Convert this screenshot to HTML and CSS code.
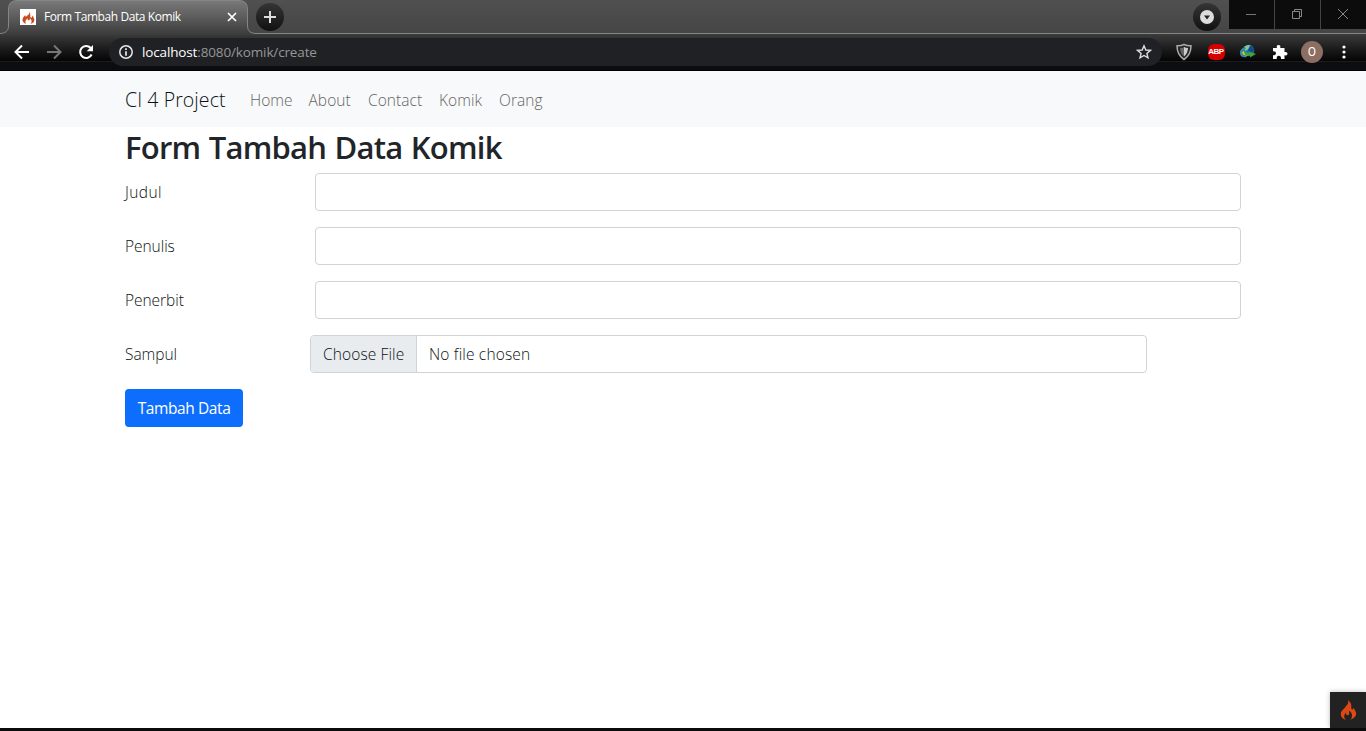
FILE: index.html
```html
<!DOCTYPE html>
<html lang="id">
<head>
<meta charset="utf-8">
<title>Form Tambah Data Komik</title>
<link rel="stylesheet" href="styles.css">
</head>
<body>
<header class="browser">
  <div class="tabstrip">
    <svg class="tab-shape" width="1366" height="35" viewBox="0 0 1366 35">
      <defs><linearGradient id="tabfill" x1="0" y1="0" x2="0" y2="1"><stop offset="0" stop-color="#797979"/><stop offset=".5" stop-color="#5b5b5b"/><stop offset="1" stop-color="#3b3b3b"/></linearGradient></defs>
      <path d="M0 33.5C5 33.5 8.500 31 8.500 26V9Q8.500.5 17 .5H239Q247.500.5 247.500 9V26Q247.500 33.500 256 33.500V35H0Z" fill="url(#tabfill)"/>
      <path d="M0 33.500C5 33.500 8.500 31 8.500 26V9Q8.500.5 17 .5H239Q247.500.5 247.500 9V26Q247.500 33.500 256 33.500H1366" fill="none" stroke="#858585"/>
    </svg>
    <div class="tab">
      <span class="favicon"><svg width="13" height="13" viewBox="0 0 20 20"><path class="flame" d="M10 0C14 4 9 6 6 9C5 8 5 7 5 6C2 9 0 12 1 15C2 18 4 19 6 20C4 16 6 13 9 11C8 13 9 15 11 14C13 13 12 12 12 11C15 13 16 17 13 20C17 19 19 17 19 14C19 11 17 10 17 7C15 8 16 11 14 10C11 9 15 4 10 0Z"/></svg></span>
      <span class="tab-title">Form Tambah Data Komik</span>
      <svg class="tab-close" width="10" height="10" viewBox="0 0 10 10"><path d="M1 1L9 9M9 1L1 9" stroke="#fff" stroke-width="1.700"/></svg>
    </div>
    <div class="round new-tab"><svg width="14" height="14" viewBox="0 0 14 14"><path d="M7 1V13M1 7H13" stroke="#ddd" stroke-width="2"/></svg></div>
    <div class="round tab-search"><svg width="14" height="14" viewBox="0 0 14 14"><circle cx="7" cy="7" r="7" fill="#ddd"/><path d="M4 5.500H10L7 9.500Z" fill="#222"/></svg></div>
    <div class="window-buttons">
      <span><svg width="12" height="12" viewBox="0 0 12 12"><path d="M1 6.500H11" stroke="#777"/></svg></span>
      <span><svg width="12" height="12" viewBox="0 0 12 12"><path d="M1.500 3.500H8.500V10.500H1.500ZM3.500 3V1.500H10.500V8.500H9" fill="none" stroke="#888"/></svg></span>
      <span><svg width="12" height="12" viewBox="0 0 12 12"><path d="M1 1L11 11M11 1L1 11" stroke="#888"/></svg></span>
    </div>
  </div>
  <div class="toolbar">
    <div class="nav-buttons">
      <svg width="16" height="16" viewBox="0 0 16 16"><path d="M15 8H2M8 1.500L1.500 8L8 14.500" fill="none" stroke="#fff" stroke-width="2"/></svg>
      <svg width="16" height="16" viewBox="0 0 16 16"><path d="M1 8H14M8 1.500L14.500 8L8 14.500" fill="none" stroke="#777" stroke-width="2"/></svg>
      <svg width="16" height="16" viewBox="0 0 16 16"><path d="M13.600 10.500A6 6 0 1 1 12.500 3.800L13 4.500" fill="none" stroke="#fff" stroke-width="2.100"/><path d="M15 1V7.300H8.700Z" fill="#fff"/></svg>
    </div>
    <div class="omnibox">
      <svg width="14" height="14" viewBox="0 0 14 14"><circle cx="7" cy="7" r="6.200" fill="none" stroke="#e8e8e8" stroke-width="1.500"/><path d="M7 3.200V4.900M7 6.200V10.700" stroke="#e8e8e8" stroke-width="1.700"/></svg>
      <span class="url"><b>localhost</b>:8080/komik/create</span>
      <svg class="star" width="16" height="16" viewBox="0 0 16 16"><path d="M8 1.800L9.800 6L14.400 6.400L10.900 9.400L12 13.900L8 11.500L4 13.900L5.100 9.400L1.600 6.400L6.200 6Z" fill="none" stroke="#ddd" stroke-width="1.400"/></svg>
    </div>
    <div class="extensions">
      <svg width="16" height="18" viewBox="0 0 16 18"><path d="M8 1.500Q11 3 15 2.800Q15 12 8 16.500Q1 12 1 2.800Q5 3 8 1.500Z" fill="#242424" stroke="#aaa" stroke-width="1.500"/><path d="M4 5Q7 5 8 4V13.500Q4 10 4 5Z" fill="#666"/><path d="M8 4Q10 5 12 5Q12 10 8 13.500Z" fill="#ccc"/></svg>
      <span class="abp">ABP</span>
      <svg width="18" height="16" viewBox="0 0 18 16"><circle cx="9.500" cy="6.500" r="5.700" fill="#1779b8"/><path d="M5 3Q9 0 12 1.500L10 5L6 7Z" fill="#8fc78b"/><path d="M11 1.500Q15 3 15.500 7L12 9L9 6Z" fill="#164792"/><path d="M6 3Q0 5 1 10Q2 14 8 13L7 11Q3 12 3.500 8Q4 5 7 5Z" fill="#2f8fae"/><path d="M3 8Q3 12 9 11.500V9.500Q5 10 5 7Z" fill="#e8c92b"/><path d="M6 6Q6 9 10 9V7.500L17 10L11 13.500V11.500Q5 12 5 8Z" fill="#42a532"/></svg>
      <svg width="16" height="16" viewBox="0 0 16 16"><path d="M1 4H5Q4 1 6.500 1Q9 1 8.200 4H12.500V8Q15.500 7.400 15.500 9.700Q15.500 12 12.500 11.300V15H9Q9.200 11.800 6.800 11.800Q4.500 11.800 4.700 15H1V11.300Q4 11.300 4 9Q4 7 1 7.200Z" fill="#fff"/></svg>
      <span class="avatar">O</span>
      <svg width="16" height="16" viewBox="0 0 16 16" fill="#fff"><circle cx="8" cy="3" r="1.600"/><circle cx="8" cy="8" r="1.600"/><circle cx="8" cy="13" r="1.600"/></svg>
    </div>
  </div>
</header>
<nav class="navbar">
  <a class="brand">CI 4 Project</a>
  <a class="link home">Home</a><a class="link about">About</a><a class="link contact">Contact</a><a class="link komik">Komik</a><a class="link orang">Orang</a>
</nav>
<main class="container">
  <h2>Form Tambah Data Komik</h2>
  <form>
    <div class="row"><label class="judul">Judul</label><div class="input"></div></div>
    <div class="row"><label>Penulis</label><div class="input"></div></div>
    <div class="row"><label>Penerbit</label><div class="input"></div></div>
    <div class="row"><label>Sampul</label><div class="file"><span class="choose">Choose File</span><span class="chosen">No file chosen</span></div></div>
    <button type="button" class="submit">Tambah Data</button>
  </form>
</main>
<div class="debug"><svg width="17" height="20" viewBox="0 0 20 24"><path class="flame" d="M9 0C11 4 8 6 5 10C2 13 0 15 1 19C2 22 4 23 7 24C4 21 4 18 7 15C7 18 8 19 10 18C12 17 10 15 11 13C13 15 15 17 14 20C14 22 13 23 12 24C17 22 20 19 19 15C18 12 17 11 16 9C16 11 15 12 14 11C12 9 16 5 9 0Z"/></svg></div>
<footer class="edge"></footer>
</body>
</html>
```
FILE: styles.css
```css
* { box-sizing: border-box; }
body { margin: 0; height: 731px; overflow: hidden; display: flex; flex-direction: column; background: #fff; color: #0c1014; font: 300 15.5px/24px "Open Sans", "Noto Sans", sans-serif; white-space: nowrap; }
svg { display: block; flex: none; }
.browser { height: 71px; flex: none; background: #000; }
.tabstrip { height: 34px; position: relative; display: flex; background: linear-gradient(#505050, #454545); }
.tab-shape { position: absolute; left: 0; top: 0; }
.tab { position: relative; width: 248px; height: 34px; padding-left: 20px; display: flex; align-items: center; color: #fff; font-size: 12px; font-weight: 400; }
.favicon { width: 16px; height: 16px; background: #fff; display: flex; align-items: center; justify-content: center; }
.flame { fill: #dd4814; }
.favicon .flame { fill: #c94a1c; }
.tab-title { width: 183px; margin-left: 8px; letter-spacing: -.42px; }
.round { position: relative; width: 28px; height: 28px; margin-top: 3px; border-radius: 50%; background: linear-gradient(#353535, #111); display: flex; align-items: center; justify-content: center; }
.new-tab { margin-left: 8px; }
.tab-search { margin-left: auto; margin-right: 8px; }
.window-buttons { position: relative; display: flex; gap: 1px; width: 137px; height: 29px; background: #444; }
.window-buttons span { flex: 1; background: #0c0c0c; display: flex; align-items: center; justify-content: center; padding-right: 2px; padding-bottom: 1px; }
.toolbar { height: 36px; display: flex; align-items: center; background: linear-gradient(#3b3b3b, #151515 18px, #050505 27px, #1d1d1d 27px, #1d1d1d 28px, #0b0d10 28px); }
.nav-buttons { display: flex; gap: 16px; padding-left: 14px; width: 109px; }
.omnibox { width: 1053px; height: 28px; border-radius: 14px; background: #202124; padding: 0 10px; display: flex; align-items: center; color: #969696; }
.url { margin-left: 9px; font-size: 13.5px; font-weight: 400; letter-spacing: -.14px; }
.url b { font-weight: 400; color: #fff; }
.star { margin-left: auto; }
.extensions { flex: 1; display: grid; grid-template-columns: repeat(6, 32px); align-items: center; justify-items: center; padding-left: 6px; }
.abp { width: 17px; height: 16px; border-radius: 6px; background: #d60000; color: #fff; font: bold 8px/16px "Liberation Sans", sans-serif; letter-spacing: -.5px; text-align: center; }
.avatar { width: 22px; height: 22px; border-radius: 50%; background: #8d6e63; color: #fff; font: 12px/22px Roboto, sans-serif; text-align: center; }
.navbar { height: 56px; flex: none; padding-left: 125px; padding-top: 1px; display: flex; align-items: center; background: #f8f9fa; }
.brand { width: 125px; font-size: 19.5px; letter-spacing: .08px; }
.link { color: #646566; padding-right: 16px; letter-spacing: .05px; }
.home { width: 58.500px; }
.about { width: 59.500px; }
.contact { width: 71px; }
.komik { width: 60px; }
.container { padding: 0 125px; flex: 1; }
h2 { margin: 0 0 7px; padding-top: 1px; font-size: 31px; line-height: 38px; font-weight: 600; letter-spacing: -.75px; word-spacing: 1px; color: #212529; }
form { display: flex; flex-direction: column; gap: 16px; align-items: flex-start; }
.row { display: flex; width: 1116px; height: 38px; align-items: center; }
.row label { width: 190px; letter-spacing: -.05px; }
.row .judul { letter-spacing: .4px; }
.input { flex: 1; height: 38px; border: 1px solid #ced4da; border-radius: 4px; }
.file { width: 837px; height: 38px; margin-left: -5px; border: 1px solid #ced4da; border-radius: 4px; overflow: hidden; display: flex; align-items: center; letter-spacing: .12px; }
.choose { width: 106px; height: 36px; padding: 6px 12px; border-right: 1px solid #ced4da; background: #e9ecef; }
.chosen { margin-left: 12px; letter-spacing: .17px; }
.submit { width: 118px; height: 38px; padding: 0; border: 0; border-radius: 4px; background: #0d6efd; color: #fff; font: inherit; font-weight: 400; letter-spacing: -.4px; }
.debug { position: absolute; right: 0; top: 692px; width: 36px; height: 36px; background: #222; display: flex; align-items: center; justify-content: center; box-shadow: 0 0 5px #bbb; }
.edge { position: relative; height: 3px; flex: none; background: #0b0b0b; }
```
